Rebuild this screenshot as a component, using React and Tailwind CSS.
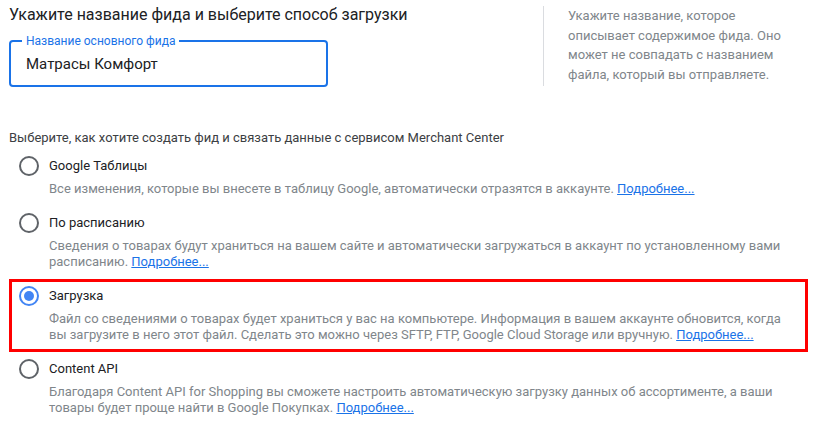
import React, { useState } from 'react';

const options = [
  {
    id: 'sheets',
    title: 'Google Таблицы',
    desc: 'Все изменения, которые вы внесете в таблицу Google, автоматически отразятся в аккаунте.',
  },
  {
    id: 'schedule',
    title: 'По расписанию',
    desc: 'Сведения о товарах будут храниться на вашем сайте и автоматически загружаться в аккаунт по установленному вами расписанию.',
  },
  {
    id: 'upload',
    title: 'Загрузка',
    desc: 'Файл со сведениями о товарах будет храниться у вас на компьютере. Информация в вашем аккаунте обновится, когда вы загрузите в него этот файл. Сделать это можно через SFTP, FTP, Google Cloud Storage или вручную.',
    highlight: true,
  },
  {
    id: 'api',
    title: 'Content API',
    desc: 'Благодаря Content API for Shopping вы сможете настроить автоматическую загрузку данных об ассортименте, а ваши товары будет проще найти в Google Покупках.',
  },
];

const Radio = ({ checked }) => (
  <span
    className={
      checked
        ? 'flex h-5 w-5 shrink-0 items-center justify-center rounded-full border-2 border-[#4285f4]'
        : 'flex h-5 w-5 shrink-0 items-center justify-center rounded-full border-2 border-[#5f6368]'
    }
  >
    {checked && <span className="h-2.5 w-2.5 rounded-full bg-[#4285f4]" />}
  </span>
);

const Option = ({ item, checked, onPick }) => (
  <div
    className={
      item.highlight
        ? 'border-[3px] border-[#ff0000] pb-[6px] pt-[4px]'
        : 'border-[3px] border-transparent pb-[6px] pt-[4px]'
    }
  >
    <div className="flex cursor-pointer gap-[10px] pl-[7px] pr-[20px]" onClick={() => onPick(item.id)}>
      <Radio checked={checked} />
      <div>
        <div className="text-[13px] leading-5 text-[#202124]">{item.title}</div>
        <p className="mt-[5px] text-[13px] leading-[16px] text-[#80868b]">
          {item.desc}{' '}
          <a href="#" className="text-[#1a73e8] underline">Подробнее...</a>
        </p>
      </div>
    </div>
  </div>
);

export default function App() {
  const [method, setMethod] = useState('upload');
  const [name, setName] = useState('Матрасы Комфорт');

  return (
    <div className="h-[427px] w-[817px] overflow-hidden bg-white font-['Roboto',sans-serif]">
      <div className="flex pl-[9px] pt-[5px]">
        <div className="w-[534px]">
          <h2 className="text-[16px] leading-5 text-[#202124]">
            Укажите название фида и выберите способ загрузки
          </h2>
          <div className="relative mt-[15px] h-[47px] w-[319px] rounded-[4px] border-2 border-[#1a73e8]">
            <span className="absolute -top-[9px] left-[11px] bg-white px-[4px] text-[12px] leading-4 text-[#1a73e8]">
              Название основного фида
            </span>
            <input
              value={name}
              onChange={(e) => setName(e.target.value)}
              className="h-full w-full bg-transparent px-[15px] pt-[1px] text-[15px] text-[#202124] outline-none"
            />
          </div>
        </div>
        <div className="mt-[1px] h-[80px] border-l border-[#dadce0]" />
        <p className="ml-[24px] mt-[1px] w-[220px] text-[13px] leading-[19.7px] text-[#80868b]">
          Укажите название, которое описывает содержимое фида. Оно может не совпадать с названием файла, который вы отправляете.
        </p>
      </div>

      <p className="mt-[43px] pl-[9px] text-[13px] leading-4 text-[#3c4043]">
        Выберите, как хотите создать фид и связать данные с сервисом Merchant Center
      </p>

      <div className="mt-[3px] flex flex-col pl-[9px] pr-[9px]">
        {options.map((item) => (
          <Option key={item.id} item={item} checked={method === item.id} onPick={setMethod} />
        ))}
      </div>
    </div>
  );
}
